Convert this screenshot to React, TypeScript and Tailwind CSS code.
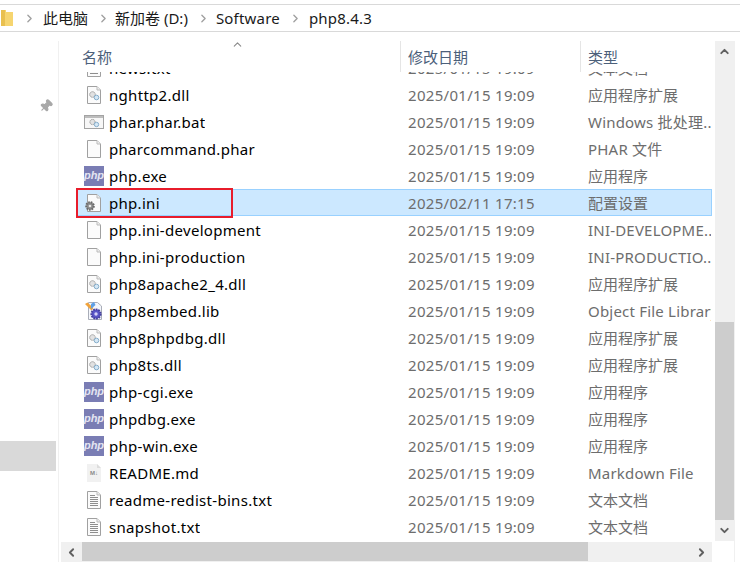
import { ChevronDown, ChevronLeft, ChevronRight, ChevronUp, Pin } from "lucide-react";

type IconKind = "dll" | "bat" | "blank" | "php" | "ini" | "lib" | "md" | "txt";

interface Row {
  name: string;
  date: string;
  type: string;
  icon: IconKind;
  selected?: boolean;
}

const D = "2025/01/15 19:09";
const DLL = "应用程序扩展";
const APP = "应用程序";
const TXT = "文本文档";

const rows: Row[] = [
  { name: "news.txt", date: D, type: TXT, icon: "txt" },
  { name: "nghttp2.dll", date: D, type: DLL, icon: "dll" },
  { name: "phar.phar.bat", date: D, type: "Windows 批处理...", icon: "bat" },
  { name: "pharcommand.phar", date: D, type: "PHAR 文件", icon: "blank" },
  { name: "php.exe", date: D, type: APP, icon: "php" },
  { name: "php.ini", date: "2025/02/11 17:15", type: "配置设置", icon: "ini", selected: true },
  { name: "php.ini-development", date: D, type: "INI-DEVELOPME...", icon: "blank" },
  { name: "php.ini-production", date: D, type: "INI-PRODUCTIO...", icon: "blank" },
  { name: "php8apache2_4.dll", date: D, type: DLL, icon: "dll" },
  { name: "php8embed.lib", date: D, type: "Object File Library", icon: "lib" },
  { name: "php8phpdbg.dll", date: D, type: DLL, icon: "dll" },
  { name: "php8ts.dll", date: D, type: DLL, icon: "dll" },
  { name: "php-cgi.exe", date: D, type: APP, icon: "php" },
  { name: "phpdbg.exe", date: D, type: APP, icon: "php" },
  { name: "php-win.exe", date: D, type: APP, icon: "php" },
  { name: "README.md", date: D, type: "Markdown File", icon: "md" },
  { name: "readme-redist-bins.txt", date: D, type: TXT, icon: "txt" },
  { name: "snapshot.txt", date: D, type: TXT, icon: "txt" },
];

const FONT = "font-['Noto_Sans','Noto_Sans_CJK_SC',sans-serif]";

function Page({ children }: { children?: React.ReactNode }) {
  return (
    <svg width="20" height="20" viewBox="0 0 20 20" className="shrink-0">
      <path d="M3.5 1.5H13L16.5 5V18.5H3.5Z" fill="#fbfbfb" stroke="#a0a0a0" />
      <path d="M13 1.5V5H16.5" fill="#eee" stroke="#bbb" />
      {children}
    </svg>
  );
}

function Gears() {
  return (
    <>
      <circle cx="8.5" cy="9.5" r="2.8" fill="#e2e2e2" stroke="#9a9a9a" strokeDasharray="1.5 0.6" />
      <circle cx="12.5" cy="12.5" r="2.3" fill="#d6e8f5" stroke="#86aecb" />
    </>
  );
}

function FileIcon({ kind }: { kind: IconKind }) {
  if (kind === "php") {
    return (
      <div className="w-5 h-5 shrink-0 bg-[#7a7db4] flex items-center justify-center">
        <span className="text-[11px] leading-none font-bold italic text-[#e4e5f2] font-['Liberation_Sans',sans-serif]">
          php
        </span>
      </div>
    );
  }
  if (kind === "dll") {
    return (
      <Page>
        <Gears />
      </Page>
    );
  }
  if (kind === "bat") {
    return (
      <svg width="20" height="20" viewBox="0 0 20 20" className="shrink-0">
        <rect x="0.5" y="3.5" width="19" height="13" fill="#f7f7f7" stroke="#a3a3a3" />
        <rect x="1" y="4" width="18" height="2" fill="#bdbdbd" />
        <circle cx="8.5" cy="10" r="2.6" fill="#e2e2e2" stroke="#9a9a9a" strokeDasharray="1.5 0.6" />
        <circle cx="12.5" cy="12.5" r="2.2" fill="#d6e8f5" stroke="#86aecb" />
      </svg>
    );
  }
  if (kind === "ini") {
    return (
      <Page>
        <circle cx="6" cy="13" r="3.8" fill="#8c8c8c" stroke="#6b6b6b" strokeDasharray="1.6 1" strokeWidth="2" />
        <circle cx="6" cy="13" r="1.3" fill="#e8e8e8" />
      </Page>
    );
  }
  if (kind === "lib") {
    return (
      <svg width="20" height="20" viewBox="0 0 20 20" className="shrink-0">
        <path d="M4.5 1.5H13.5L17.5 5V18.5H4.5Z" fill="#f4f6fb" stroke="#a9adb8" />
        <path d="M1 3L3.5 1.5L9.5 7L7.5 9.5Z" fill="#f2a33a" />
        <path d="M7 3L10 1L11.5 4L7 8Z" fill="#5fa0e6" />
        <circle cx="12" cy="13" r="4.6" fill="#5a55c8" stroke="#47429f" strokeDasharray="1.8 0.8" strokeWidth="2" />
        <circle cx="12" cy="13" r="1.7" fill="#d5d3f5" />
      </svg>
    );
  }
  if (kind === "md") {
    return (
      <div className="relative w-5 h-5 shrink-0 flex items-center justify-center">
        <svg width="20" height="20" viewBox="0 0 20 20" className="absolute inset-0">
          <path d="M3 1H13L17 5V19H3Z" fill="#f1f1f1" />
          <path d="M13 1V5H17Z" fill="#dcdcdc" />
        </svg>
        <span className="relative text-[6px] leading-none font-bold text-[#8a8a8a] font-['Liberation_Sans',sans-serif]">
          M↓
        </span>
      </div>
    );
  }
  if (kind === "txt") {
    return (
      <Page>
        <path d="M6 5.5H11M6 7.5H14M6 9.5H14M6 11.5H14M6 13.5H14M6 15.5H14" stroke="#8e8e8e" />
      </Page>
    );
  }
  return <Page />;
}

function FileRow({ row }: { row: Row }) {
  const latinType = /[A-Za-z]/.test(row.type);
  return (
    <div
      className={`relative flex items-center h-[27px] shrink-0 border ${
        row.selected ? "bg-[#cce8ff] border-[#99d1ff]" : "border-transparent"
      }`}
    >
      <div className="w-[323px] shrink-0 flex items-center gap-[5px] pl-[6px] text-[15px] leading-[20px] text-[#000]">
        <FileIcon kind={row.icon} />
        <span className="truncate tracking-[0.3px]">{row.name}</span>
      </div>
      <div className="w-[180px] shrink-0 pl-[7px] text-[15px] leading-[20px] tracking-[0.3px] text-[#6d6d6d]">
        {row.date}
      </div>
      <div
        className={`flex-1 min-w-0 pl-[7px] text-[15px] leading-[20px] text-[#6d6d6d] whitespace-nowrap overflow-hidden ${
          latinType ? "tracking-[0.2px]" : ""
        }`}
      >
        {row.type}
      </div>
      {row.selected && (
        <div className="absolute -left-[2px] -top-[2px] w-[157px] h-[30px] border-2 border-[#e81c2b]" />
      )}
    </div>
  );
}

export default function App() {
  return (
    <div className={`w-[740px] h-[570px] overflow-hidden bg-white flex flex-col ${FONT}`}>
      {/* Address bar */}
      <div className="mt-[4px] h-[28px] shrink-0 border-y border-[#d9d9d9] flex items-center text-[15px] leading-[20px] text-[#1a1a1a]">
        <svg width="13" height="18" viewBox="0 0 13 18" className="shrink-0">
          <path d="M1 1H6V3H13V17H1Z" fill="#f6d570" />
          <path d="M1 1H5V17H1Z" fill="#e9c04f" />
        </svg>
        <ChevronRight size={13} strokeWidth={2.5} className="text-[#a0a0a0] ml-[10px] mr-[7px]" />
        <span>此电脑</span>
        <ChevronRight size={13} strokeWidth={2.5} className="text-[#a0a0a0] ml-[9px] mr-[5px]" />
        <span>新加卷 (D:)</span>
        <ChevronRight size={13} strokeWidth={2.5} className="text-[#a0a0a0] ml-[9px] mr-[6px]" />
        <span className="tracking-[0.2px]">Software</span>
        <ChevronRight size={13} strokeWidth={2.5} className="text-[#a0a0a0] ml-[9px] mr-[7px]" />
        <span className="tracking-[0.2px]">php8.4.3</span>
      </div>

      <div className="mt-[9px] h-[521px] shrink-0 flex">
        {/* Navigation pane */}
        <div className="w-[58px] shrink-0 flex flex-col">
          <Pin size={14} fill="#a8a8a8" className="text-[#a8a8a8] ml-[39px] mt-[58px] rotate-45" />
          <div className="w-[56px] h-[30px] bg-[#d9d9d9] mt-[328px]" />
        </div>

        {/* File list */}
        <div className="w-[677px] shrink-0 border-x border-[#f0f0f0] flex">
          <div className="w-[654px] ml-[2px] flex flex-col">
            <div className="h-[31px] shrink-0 relative flex text-[15px] leading-[20px] text-[#4c607a]">
              <ChevronUp size={13} className="absolute left-[170px] -top-[3px] text-[#8a8a8a]" />
              <div className="w-[339px] pl-[21px] pt-[6px]">名称</div>
              <div className="w-[180px] pl-[7px] pt-[6px] border-l border-[#e5e5e5]">修改日期</div>
              <div className="flex-1 pl-[7px] pt-[6px] border-l border-[#e5e5e5]">类型</div>
            </div>
            <div className="h-[469px] shrink-0 overflow-hidden pl-[16px] pr-[3px]">
              <div className="-mt-[18px] flex flex-col">
                {rows.map((r) => (
                  <FileRow key={r.name} row={r} />
                ))}
              </div>
            </div>
            {/* Horizontal scrollbar */}
            <div className="h-[20px] mt-[1px] shrink-0 bg-[#f0f0f0] flex w-[651px]">
              <div className="w-[21px] flex items-center justify-center">
                <ChevronLeft size={13} strokeWidth={3.5} className="text-[#606060]" />
              </div>
              <div className="w-[506px] h-[19px] bg-[#cdcdcd]" />
              <div className="flex-1 flex items-center justify-end pr-[4px]">
                <ChevronRight size={13} strokeWidth={3.5} className="text-[#606060]" />
              </div>
            </div>
          </div>

          {/* Vertical scrollbar */}
          <div className="w-[20px] h-[500px] bg-[#f0f0f0] flex flex-col">
            <div className="h-[20px] flex items-center justify-center">
              <ChevronUp size={13} strokeWidth={3.5} className="text-[#606060]" />
            </div>
            <div className="mt-[261px] w-[19px] h-[198px] bg-[#cdcdcd]" />
            <div className="h-[20px] flex items-center justify-center">
              <ChevronDown size={13} strokeWidth={3.5} className="text-[#606060]" />
            </div>
          </div>
        </div>
      </div>
    </div>
  );
}
